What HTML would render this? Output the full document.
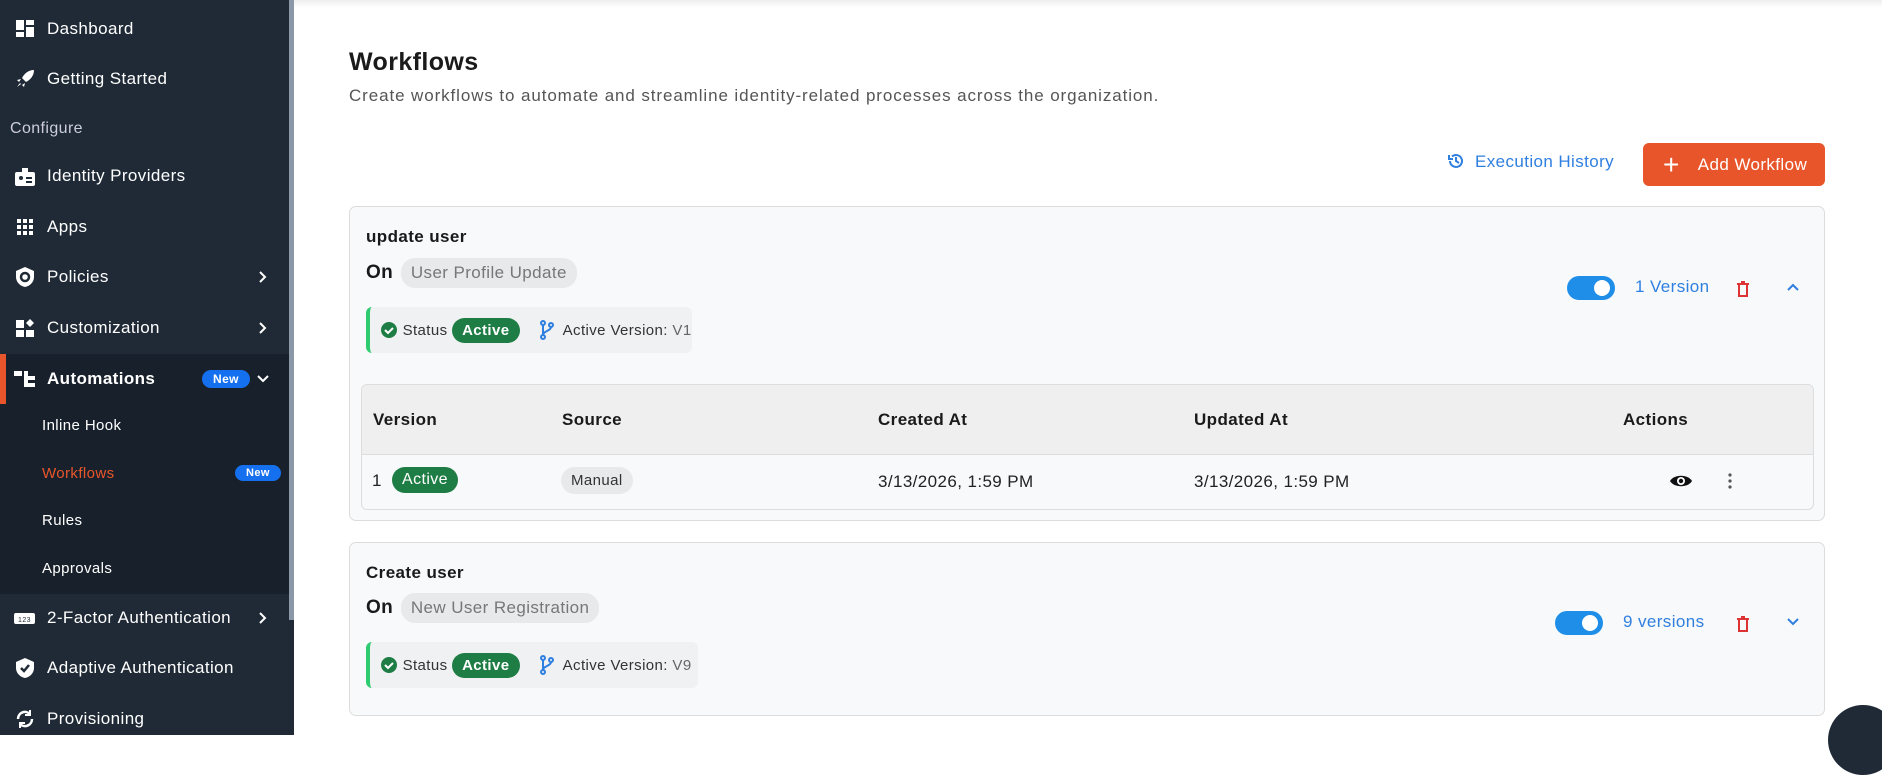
<!DOCTYPE html>
<html><head><meta charset="utf-8"><style>
*{box-sizing:border-box;margin:0;padding:0}
body{width:1882px;height:735px;overflow:hidden;font-family:"Liberation Sans",sans-serif;background:#fff;position:relative;letter-spacing:0.4px}
.sb{position:absolute;left:0;top:0;width:294px;height:735px;background:#1f2a36;color:#fff}
.sb .scroll{position:absolute;right:0;top:0;width:5px;height:620px;background:#8a98a8}
.it{position:absolute;left:0;width:289px;height:50px;display:flex;align-items:center;font-size:17px}
.it .ic{position:absolute;left:14px;width:22px;height:22px}
.it .tx{position:absolute;left:47px}
.it .ch{position:absolute;left:258px;top:18px}
.sub{position:absolute;left:42px;font-size:15px}
.badge{background:#1570ef;color:#fff;font-weight:bold;font-size:12px;border-radius:9px;padding:2px 11px}
.card{position:absolute;left:349px;width:1476px;background:#f8f9fa;border:1px solid #dcdcdc;border-radius:7px}
.chip{display:inline-block;background:#e8e9eb;color:#777;border-radius:14px;padding:5px 10px;font-size:17px}
.stat{position:absolute;left:16px;height:46px;background:#f0f1f2;border-left:4px solid #2ecc71;border-radius:6px;display:flex;align-items:center;font-size:15px;color:#333;padding-left:10px}
.gp{background:#1e7d44;color:#fff;font-weight:bold;border-radius:13px;padding:4px 10px;font-size:15px}
.tog{position:absolute;width:48px;height:24px;background:#1e8ee9;border-radius:12px}
.tog:after{content:"";position:absolute;right:5px;top:4px;width:16px;height:16px;border-radius:50%;background:#fff}
.blue{color:#2f7fe0}
</style></head><body>
<div class="sb">
<div class="scroll"></div>
<div class="it" style="top:4px"><svg class="ic" viewBox="0 0 22 22"><rect x="2" y="2" width="8" height="10" fill="#fff"/><rect x="12" y="2" width="8" height="5" fill="#fff"/><rect x="2" y="14" width="8" height="5" fill="#fff"/><rect x="12" y="9" width="8" height="10" fill="#fff"/></svg><span class="tx">Dashboard</span></div>
<div class="it" style="top:54px"><svg class="ic" viewBox="0 0 22 22"><path d="M20 2C14 2 10 6 8 10l4 4c4-2 8-6 8-12zM7 11l-4 1 2 2zM11 15l-1 4-2-2zM3 19l4-3-1-1z" fill="#fff"/></svg><span class="tx">Getting Started</span></div>
<div style="position:absolute;left:10px;top:120px;font-size:16px;color:#ccd">Configure</div>
<div class="it" style="top:151px"><svg class="ic" viewBox="0 0 22 22"><rect x="1" y="7" width="20" height="14" rx="2" fill="#fff"/><rect x="8" y="3" width="6" height="6" fill="#fff"/><circle cx="7" cy="13" r="2" fill="#1f2a36"/><rect x="12" y="12" width="6" height="2" fill="#1f2a36"/><rect x="12" y="16" width="6" height="2" fill="#1f2a36"/></svg><span class="tx">Identity Providers</span></div>
<div class="it" style="top:202px"><svg class="ic" viewBox="0 0 22 22" fill="#fff"><rect x="3" y="3" width="4" height="4"/><rect x="9" y="3" width="4" height="4"/><rect x="15" y="3" width="4" height="4"/><rect x="3" y="9" width="4" height="4"/><rect x="9" y="9" width="4" height="4"/><rect x="15" y="9" width="4" height="4"/><rect x="3" y="15" width="4" height="4"/><rect x="9" y="15" width="4" height="4"/><rect x="15" y="15" width="4" height="4"/></svg><span class="tx">Apps</span></div>
<div class="it" style="top:252px"><svg class="ic" viewBox="0 0 22 22"><path d="M11 1l9 4v6c0 5-4 9-9 10C6 20 2 16 2 11V5z" fill="#fff"/><circle cx="11" cy="11" r="4" fill="none" stroke="#1f2a36" stroke-width="2.5"/></svg><span class="tx">Policies</span><svg class="ch" width="10" height="14" viewBox="0 0 10 14" fill="none" stroke="#fff" stroke-width="2"><path d="M2 2l5 5-5 5"/></svg></div>
<div class="it" style="top:303px"><svg class="ic" viewBox="0 0 22 22" fill="#fff"><rect x="2" y="3" width="8" height="8"/><rect x="2" y="13" width="8" height="7"/><rect x="12" y="13" width="8" height="7"/><path d="M16 2l4 4-4 4-4-4z"/></svg><span class="tx">Customization</span><svg class="ch" width="10" height="14" viewBox="0 0 10 14" fill="none" stroke="#fff" stroke-width="2"><path d="M2 2l5 5-5 5"/></svg></div>
<div style="position:absolute;left:0;top:354px;width:289px;height:240px;background:#18212b"></div>
<div style="position:absolute;left:0;top:354px;width:6px;height:50px;background:#e9552a"></div>
<div class="it" style="top:354px;font-weight:bold"><svg class="ic" viewBox="0 0 22 22" fill="#fff"><rect x="0" y="3" width="8" height="5"/><rect x="10" y="3" width="4" height="16"/><rect x="14" y="8" width="7" height="4"/><rect x="14" y="15" width="7" height="4"/></svg><span class="tx">Automations</span><span class="badge" style="position:absolute;left:202px">New</span><svg class="ch" style="left:256px;top:20px" width="14" height="10" viewBox="0 0 14 10" fill="none" stroke="#fff" stroke-width="2"><path d="M2 2l5 5 5-5"/></svg></div>
<div class="sub" style="top:417px">Inline Hook</div>
<div class="sub" style="top:465px;color:#e9552a">Workflows</div>
<span class="badge" style="position:absolute;left:235px;top:465px;font-size:11px">New</span>
<div class="sub" style="top:512px">Rules</div>
<div class="sub" style="top:560px">Approvals</div>
<div class="it" style="top:593px"><svg class="ic" viewBox="0 0 22 22"><rect x="0" y="6" width="21" height="11" rx="2" fill="#fff"/><text x="10.5" y="15" font-size="7" text-anchor="middle" fill="#1f2a36" font-family="Liberation Sans">123</text></svg><span class="tx">2-Factor Authentication</span><svg class="ch" width="10" height="14" viewBox="0 0 10 14" fill="none" stroke="#fff" stroke-width="2"><path d="M2 2l5 5-5 5"/></svg></div>
<div class="it" style="top:643px"><svg class="ic" viewBox="0 0 22 22"><path d="M11 1l9 4v6c0 5-4 9-9 10C6 20 2 16 2 11V5z" fill="#fff"/><path d="M7 11l3 3 5-6" stroke="#1f2a36" stroke-width="2.5" fill="none"/></svg><span class="tx">Adaptive Authentication</span></div>
<div class="it" style="top:694px"><svg class="ic" viewBox="0 0 22 22" fill="none" stroke="#fff" stroke-width="2.5"><path d="M4 11a7 7 0 0 1 12-5M18 11a7 7 0 0 1-12 5"/><path d="M16 2v5h-5M6 20v-5h5" stroke-width="2"/></svg><span class="tx">Provisioning</span></div>
</div>
<div style="position:absolute;left:294px;top:0;right:0;height:8px;background:linear-gradient(#eee,#fff)"></div>
<div style="position:absolute;left:349px;top:48px;font-size:25px;font-weight:bold;color:#1a1a1a">Workflows</div>
<div style="position:absolute;left:349px;top:86px;font-size:17px;color:#555;letter-spacing:0.9px">Create workflows to automate and streamline identity-related processes across the organization.</div>
<div style="position:absolute;left:1447px;top:152px;font-size:17px" class="blue"><svg width="18" height="18" viewBox="0 0 18 18" style="vertical-align:-3px;margin-right:10px" fill="none" stroke="#2f7fe0" stroke-width="2"><path d="M3 9a6 6 0 1 0 2-4.5"/><path d="M2 3v4h4"/><path d="M9 5v4l3 2"/></svg>Execution History</div>
<div style="position:absolute;left:1643px;top:143px;width:182px;height:43px;background:#e9552a;border-radius:6px;color:#fff;font-size:17px;display:flex;align-items:center;padding-left:20px"><span style="font-size:28px;font-weight:300;margin-right:18px;line-height:1">+</span>Add Workflow</div>

<div class="card" style="top:206px;height:315px">
<div style="position:absolute;left:16px;top:20px;font-size:17px;font-weight:bold;color:#1a1a1a">update user</div>
<div style="position:absolute;left:16px;top:51px;font-size:19px;font-weight:bold;color:#1a1a1a">On <span class="chip" style="font-weight:normal;margin-left:2px">User Profile Update</span></div>
<div class="stat" style="top:100px;width:326px"><svg width="18" height="18" viewBox="0 0 18 18"><circle cx="9" cy="9" r="8" fill="#1e7d44"/><path d="M5 9l3 3 5-5" stroke="#fff" stroke-width="2" fill="none"/></svg>&nbsp;Status&nbsp;<span class="gp">Active</span><svg style="margin-left:20px" width="14" height="20" viewBox="0 0 14 20" fill="none" stroke="#2f7fe0" stroke-width="2"><circle cx="3" cy="3" r="2"/><circle cx="3" cy="17" r="2"/><circle cx="11" cy="5" r="2"/><path d="M3 5v10M11 7c0 4-8 4-8 8"/></svg>&nbsp;&nbsp;Active Version: <span style="color:#666">&nbsp;V1</span></div>
<div class="tog" style="left:1217px;top:69px"></div>
<div style="position:absolute;left:1285px;top:70px;font-size:17px" class="blue">1 Version</div>
<svg style="position:absolute;left:1386px;top:74px" width="14" height="16" viewBox="0 0 14 16" fill="none" stroke="#d33" stroke-width="2"><path d="M1 3h12M5 1h4M3 4v11h8V4"/></svg>
<svg style="position:absolute;left:1436px;top:75px" width="14" height="10" viewBox="0 0 14 10" fill="none" stroke="#2f7fe0" stroke-width="2"><path d="M2 8l5-5 5 5"/></svg>
<div style="position:absolute;left:11px;top:177px;width:1453px;height:126px;border:1px solid #ddd;border-radius:6px;overflow:hidden;background:#f8f9fa">
<div style="height:70px;background:#efefef;border-bottom:1px solid #ddd;position:relative;font-weight:bold;font-size:17px;color:#1a1a1a">
<span style="position:absolute;left:11px;top:25px">Version</span><span style="position:absolute;left:200px;top:25px">Source</span><span style="position:absolute;left:516px;top:25px">Created At</span><span style="position:absolute;left:832px;top:25px">Updated At</span><span style="position:absolute;left:1261px;top:25px">Actions</span></div>
<div style="position:relative;font-size:17px;color:#222">
<span style="position:absolute;left:10px;top:16px">1</span><span class="gp" style="position:absolute;left:30px;top:12px;font-weight:normal;font-size:16px">Active</span>
<span class="chip" style="position:absolute;left:199px;top:12px;font-size:15px;color:#333">Manual</span>
<span style="position:absolute;left:516px;top:17px">3/13/2026, 1:59 PM</span><span style="position:absolute;left:832px;top:17px">3/13/2026, 1:59 PM</span>
<svg style="position:absolute;left:1307px;top:18px" width="24" height="16" viewBox="0 0 24 16"><path d="M1 8C5 1 19 1 23 8 19 15 5 15 1 8z" fill="#111"/><circle cx="12" cy="8" r="4" fill="#fff"/><circle cx="12" cy="8" r="2.2" fill="#111"/></svg>
<svg style="position:absolute;left:1366px;top:17px" width="4" height="18" viewBox="0 0 4 18" fill="#555"><circle cx="2" cy="3" r="1.6"/><circle cx="2" cy="9" r="1.6"/><circle cx="2" cy="15" r="1.6"/></svg>
</div></div>
</div>

<div class="card" style="top:542px;height:174px">
<div style="position:absolute;left:16px;top:20px;font-size:17px;font-weight:bold;color:#1a1a1a">Create user</div>
<div style="position:absolute;left:16px;top:50px;font-size:19px;font-weight:bold;color:#1a1a1a">On <span class="chip" style="font-weight:normal;margin-left:2px">New User Registration</span></div>
<div class="stat" style="top:99px;width:332px"><svg width="18" height="18" viewBox="0 0 18 18"><circle cx="9" cy="9" r="8" fill="#1e7d44"/><path d="M5 9l3 3 5-5" stroke="#fff" stroke-width="2" fill="none"/></svg>&nbsp;Status&nbsp;<span class="gp">Active</span><svg style="margin-left:20px" width="14" height="20" viewBox="0 0 14 20" fill="none" stroke="#2f7fe0" stroke-width="2"><circle cx="3" cy="3" r="2"/><circle cx="3" cy="17" r="2"/><circle cx="11" cy="5" r="2"/><path d="M3 5v10M11 7c0 4-8 4-8 8"/></svg>&nbsp;&nbsp;Active Version: <span style="color:#666">&nbsp;V9</span></div>
<div class="tog" style="left:1205px;top:68px"></div>
<div style="position:absolute;left:1273px;top:69px;font-size:17px" class="blue">9 versions</div>
<svg style="position:absolute;left:1386px;top:73px" width="14" height="16" viewBox="0 0 14 16" fill="none" stroke="#d33" stroke-width="2"><path d="M1 3h12M5 1h4M3 4v11h8V4"/></svg>
<svg style="position:absolute;left:1436px;top:74px" width="14" height="10" viewBox="0 0 14 10" fill="none" stroke="#2f7fe0" stroke-width="2"><path d="M2 2l5 5 5-5"/></svg>
</div>
<div style="position:absolute;left:1828px;top:705px;width:70px;height:70px;border-radius:50%;background:#1f2a36"></div>
</body></html>
